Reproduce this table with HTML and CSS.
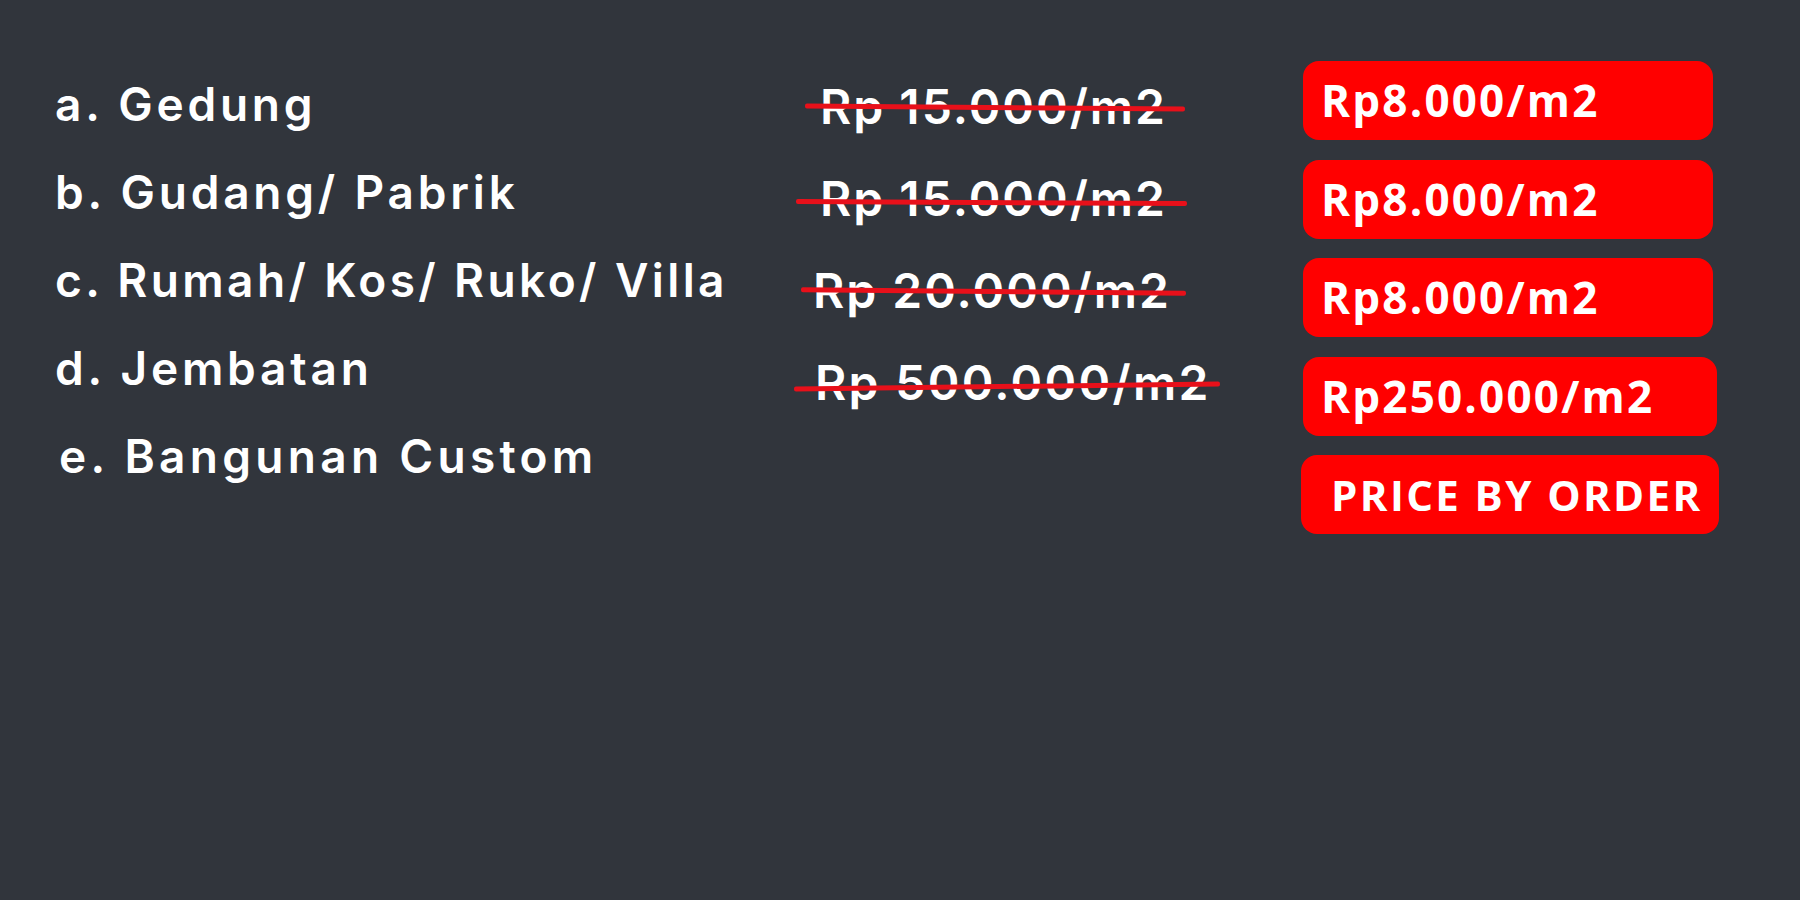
FILE: index.html
```html
<!DOCTYPE html>
<html lang="id">
<head>
<meta charset="utf-8">
<title>Harga Jasa</title>
<link rel="stylesheet" href="styles.css">
</head>
<body>
<main class="board">
  <ul class="items">
    <li class="item">a. Gedung</li>
    <li class="item">b. Gudang/ Pabrik</li>
    <li class="item item-c">c. Rumah/ Kos/ Ruko/ Villa</li>
    <li class="item">d. Jembatan</li>
    <li class="item item-e">e. Bangunan Custom</li>
  </ul>
  <ul class="old-prices">
    <li class="old old-1"><span class="strike">Rp 15.000/m2</span></li>
    <li class="old old-2"><span class="strike">Rp 15.000/m2</span></li>
    <li class="old old-3"><span class="strike">Rp 20.000/m2</span></li>
    <li class="old old-4"><span class="strike">Rp 500.000/m2</span></li>
  </ul>
  <ul class="new-prices">
    <li class="tag">Rp8.000/m2</li>
    <li class="tag">Rp8.000/m2</li>
    <li class="tag">Rp8.000/m2</li>
    <li class="tag tag-wide">Rp250.000/m2</li>
    <li class="tag tag-order">PRICE BY ORDER</li>
  </ul>
</main>
</body>
</html>
```

FILE: styles.css
```css
html, body {
  margin: 0;
  padding: 0;
  background: #31353c;
}
body {
  width: 1800px;
  height: 900px;
  overflow: hidden;
  color: #ffffff;
  font-family: "Inter", "DejaVu Sans", sans-serif;
}
ul {
  list-style: none;
  margin: 0;
  padding: 0;
}
.board {
  display: grid;
  grid-template-columns: 765px 483px 420px;
  padding: 60px 0 0 55px;
  align-items: start;
}

/* left column */
.items {
  display: flex;
  flex-direction: column;
}
.item {
  font-size: 46px;
  font-weight: 600;
  line-height: 88px;
  letter-spacing: 3.8px;
  white-space: nowrap;
}
.item-c {
  letter-spacing: 3.4px;
}
.item-e {
  padding-left: 4px;
  letter-spacing: 4.3px;
}

/* struck prices */
.old-prices {
  display: flex;
  flex-direction: column;
  padding-top: 1px;
}
.old {
  font-size: 48px;
  font-weight: 600;
  line-height: 92px;
  letter-spacing: 2px;
  white-space: nowrap;
}
.old-3 { margin-left: -7px; }
.old-4 { margin-left: -5px; letter-spacing: 2.3px; }
.strike {
  position: relative;
  display: inline-block;
}
.strike::after {
  content: "";
  position: absolute;
  height: 5px;
  background: #e8101a;
  border-radius: 2px;
  top: 44px;
  left: -15px;
  right: -18px;
  transform: rotate(0.45deg);
}
.old-2 .strike::after {
  top: 47px;
  left: -24px;
  right: -20px;
  transform: rotate(0.3deg);
}
.old-3 .strike::after {
  top: 44px;
  left: -12px;
  right: -15px;
  transform: rotate(0.55deg);
}
.old-4 .strike::after {
  top: 47px;
  left: -21px;
  right: -9px;
  transform: rotate(-0.7deg);
}

/* new prices */
.new-prices {
  display: flex;
  flex-direction: column;
  gap: 19.5px;
  padding-top: 1px;
}
.tag {
  box-sizing: border-box;
  width: 410px;
  height: 79px;
  line-height: 79px;
  padding-left: 18px;
  background: #ff0000;
  border-radius: 16px;
  font-family: "Open Sans", "Noto Sans", sans-serif;
  font-weight: 700;
  font-size: 44px;
  letter-spacing: 2.2px;
  white-space: nowrap;
}
.tag-wide {
  width: 414px;
}
.tag-order {
  width: 418px;
  margin-left: -2px;
  padding-left: 30px;
  font-size: 42px;
  letter-spacing: 2.4px;
}
```
